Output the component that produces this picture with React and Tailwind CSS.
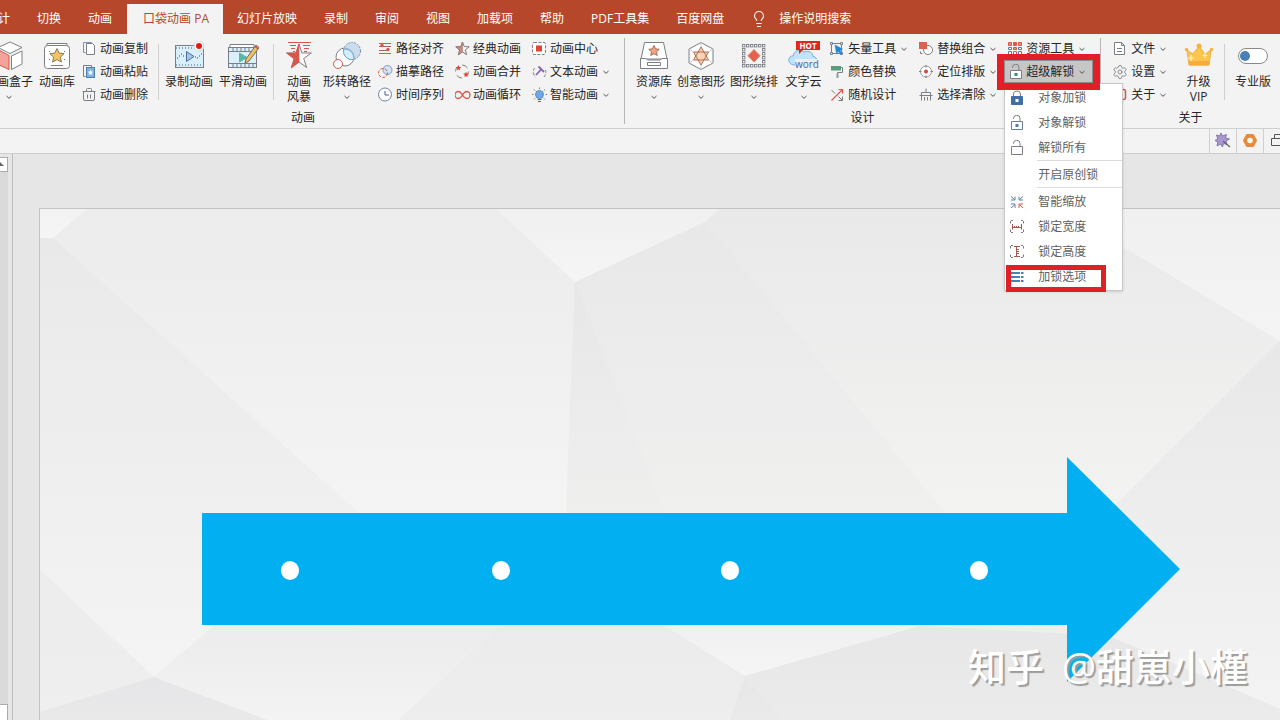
import { Settings, Lightbulb } from "lucide-react";

const RED = "#d8574a";
const BLUE = "#4a7ebb";
const GREY = "#7b7f85";

function star(cx, cy, r, inner = 0.42) {
  return Array.from({ length: 10 }, (_, i) => {
    const a = (Math.PI / 5) * i - Math.PI / 2;
    const d = i % 2 ? r * inner : r;
    return `${(cx + d * Math.cos(a)).toFixed(2)},${(cy + d * Math.sin(a)).toFixed(2)}`;
  }).join(" ");
}

function Big({ children }) {
  return (
    <svg width="32" height="30" viewBox="0 0 32 30" fill="none" stroke={GREY} className="shrink-0" aria-hidden="true">
      {children}
    </svg>
  );
}

function Small({ children }) {
  return (
    <svg width="16" height="16" viewBox="0 0 16 16" fill="none" stroke={GREY} className="shrink-0" aria-hidden="true">
      {children}
    </svg>
  );
}

function Chevron() {
  return (
    <svg width="8" height="8" viewBox="0 0 8 8" fill="none" stroke="#555" className="shrink-0" aria-hidden="true">
      <path d="M1.5 3 4 5.3 6.5 3" />
    </svg>
  );
}

/* ---------- large ribbon icons ---------- */

const BoxIcon = () => (
  <Big>
    <path d="M4 8 16 14.5V28.5L4 23Z" fill="#f4a39b" stroke={RED} />
    <path d="M17 1 29 6.5 17 12.5 5 6.5Z" fill="#fff" />
    <path d="M18.5 15 29 10V23L18.5 28.5Z" fill="#fff" />
  </Big>
);

const LibraryIcon = () => (
  <Big>
    <path d="M6 5V2.5h20V5" fill="#fff" />
    <rect x="3.5" y="4.5" width="25" height="23" rx="3" fill="#fff" />
    <polygon points={star(16, 15, 7.5, 0.48)} fill="#f3c35f" stroke="#8a7a5a" />
    <path d="M10 24.5h12" />
    <path d="M8 10l1 1M24 10l-1 1M8 19l1-1M24 19l-1-1" stroke={BLUE} />
  </Big>
);

const RecordIcon = () => (
  <Big>
    <rect x="2.5" y="4.5" width="28" height="22" fill="#d9effc" />
    <path d="M3 7h27M3 24h27" stroke="#4c5b68" strokeDasharray="1 2" />
    <path d="M13.5 10.5 21 15.5 13.500 20.5Z" fill="#a9c6ea" stroke="#4a6f9f" />
    <path d="M4 17h1M6 15h1M8 13h1M10 15h1M22 16h1M24 17h1M26 15h1M28 13h1" stroke="#3b9b80" strokeWidth="1.5" />
    <circle cx="26" cy="5" r="5" fill="#fff" stroke="#d5d5d5" />
    <circle cx="26" cy="5" r="3" fill="#e21b12" stroke="none" />
  </Big>
);

const SmoothIcon = () => (
  <Big>
    <path d="M3 6V3.5h24V6" fill="#fff" />
    <rect x="1.5" y="6.5" width="28" height="20" fill="#d9effc" />
    <path d="M2 10.5h27M2 22.5h27M6 7v3M10 7v3M14 7v3M18 7v3M22 7v3M6 23v3M10 23v3M14 23v3M18 23v3M22 23v3M26 23v3" />
    <path d="M12.5 12 20 16.500 12.5 21Z" fill="#5ab8a5" stroke="#5ab8a5" />
    <path d="M18 22 19 18 28 5.5 31 8 22 20Z" fill="#f3c35f" stroke="#6b6b6b" />
    <path d="M28 5.5 29 4 32 6.5 31 8Z" fill="#e8776a" stroke="#a85b52" />
  </Big>
);

const StormIcon = () => (
  <Big>
    <path d="M5 1.5h23M7 4.5h6M20 4.5h7M8 7.5h4M21 7.5h5M10 10.5h2M21 10.5h3" stroke={RED} />
    <polygon points={star(16, 16, 13, 0.38)} fill="#fff" />
    <path d="M16 3 12.8 12H3.6l7.5 6-2.8 9L16 21Z" fill={RED} stroke={RED} strokeWidth="0.6" />
  </Big>
);

const ShapePathIcon = () => (
  <Big>
    <circle cx="14" cy="16" r="9" fill="#fff" />
    <circle cx="21" cy="10" r="8.5" fill="#b9d3ea" fillOpacity="0.7" stroke="#7793b5" strokeDasharray="2 1" />
    <path d="M12.7 8.200a9 9 0 0 1 10.100 10.200 8.500 8.500 0 0 1-10.100-10.200Z" fill="#d6eefb" stroke="#6da3d0" />
    <circle cx="7" cy="23" r="4.5" fill="#fff" stroke={RED} />
  </Big>
);

const ResourceIcon = () => (
  <Big>
    <path d="M6.5 1.5h19L29 18H3Z" fill="#fff" />
    <path d="M2.5 17.500h5.500l1.500 1.500h13l1.500-1.500h5.500v10h-27Z" fill="#fff" />
    <polygon points={star(16, 10, 5.5, 0.48)} fill="#f4a37e" stroke="#a0705f" />
    <path d="M9.5 21.5h13v3h-13Z" fill="#fff" />
  </Big>
);

const CreativeIcon = () => (
  <Big>
    <path d="M16 1.5 28 8v14L16 28.500 4 22V8Z" fill="#fff" />
    <path d="M8.500 11h15L16 24ZM16 6 23.5 19h-15Z" fill="#fbd3b4" stroke="#a86f52" />
    <path d="M16 1.500V6M28 8l-4.500 3M28 22l-4.500-3M16 28.500V24M4 22l4.500-3M4 8l4.500 3" stroke="#c9c9c9" />
  </Big>
);

const WRAP_STEPS = [4.5, 8.5, 12.5, 16.5, 20.5, 24.5];

const WrapIcon = () => (
  <Big>
    <g fill="#fff" strokeWidth="0.9">
      {WRAP_STEPS.map((p) => (
        <g key={p}>
          <rect x={p} y="3.5" width="2.4" height="2.400" />
          <rect x={p} y="23.5" width="2.4" height="2.400" />
        </g>
      ))}
      {WRAP_STEPS.slice(1, 5).map((p) => (
        <g key={p}>
          <rect x="4.5" y={p - 1} width="2.4" height="2.400" />
          <rect x="24.5" y={p - 1} width="2.4" height="2.400" />
        </g>
      ))}
    </g>
    <path d="M16 8.5 22 14.700 16 21 10 14.700Z" fill="#e8604c" stroke="#d9826f" />
  </Big>
);

const WordCloudIcon = () => (
  <Big>
    <path d="M6 24C-1.500 23 0 14.500 5 15c1-5.500 7-7.500 11-4 5-2 9 1 9 4.500 5 .500 5 7 2 8.500Z" fill="#bfe4fb" stroke="#74b0dc" />
    <path d="M11 8v5l5-5Z" fill="#e3251b" stroke="none" />
    <rect x="8" y="0" width="24" height="9" fill="#e3251b" stroke="none" />
    <text x="20" y="7.500" textAnchor="middle" fontFamily="'Open Sans', sans-serif" fontSize="8" fontWeight="700" fill="#fff" stroke="none">HOT</text>
    <rect x="7" y="18" width="25" height="9" fill="#f3f3f3" fillOpacity="0.8" stroke="none" />
    <text x="19" y="27" textAnchor="middle" fontFamily="'Open Sans', sans-serif" fontSize="10" fill="#4a62a8" stroke="none">word</text>
  </Big>
);

const CrownIcon = () => (
  <Big>
    <path d="M4 9 10 13 16 5 22 13 28 9 26 24H6Z" fill="#fbc64b" stroke="#f2ae3c" />
    <path d="M6 20h20.500l-.5 4.500H6.500Z" fill="#f5ab40" stroke="none" />
    <circle cx="3.500" cy="8.5" r="1.700" fill="#fbb03b" stroke="none" />
    <circle cx="16" cy="5" r="2.500" fill="#fbb03b" stroke="none" />
    <circle cx="28.500" cy="8.500" r="1.700" fill="#fbb03b" stroke="none" />
    <path d="M8 14v6M5 17h6M22 12v5M19.500 14.500h5" stroke="#fff3c9" strokeWidth="1.2" />
  </Big>
);

/* ---------- small ribbon icons ---------- */

const CopyIcon = () => (
  <Small>
    <path d="M3.5 11.5h-2v-10h8v1" stroke="#7d93ad" />
    <path d="M4.5 2.5h6l2 2v9h-8Z" fill="#fff" />
  </Small>
);

const PasteIcon = () => (
  <Small>
    <path d="M3.5 12.5h-2v-11h8v2" />
    <rect x="4.5" y="3.5" width="8" height="10" fill="#7fb2e0" stroke="#4d7fb0" />
    <polygon points={star(8.5, 8.7, 3.2)} fill="#fff" stroke="none" />
  </Small>
);

const TrashIcon = () => (
  <Small>
    <path d="M.5 4.500h13M4.500 4V2.500a1 1 0 0 1 1-1h3a1 1 0 0 1 1 1V4M1.500 5v7a1.500 1.500 0 0 0 1.500 1.500h8a1.500 1.500 0 0 0 1.500-1.500V5M5.500 7.500v4M8.500 7.500v4" />
  </Small>
);

const AlignIcon = () => (
  <Small>
    <path d="M1 2.5h12M1 12.5h12" stroke={RED} />
    <path d="M1 5.500h12M1 9.500h9" stroke="#9a6a63" />
    <circle cx="4" cy="4.500" r="1.700" fill={RED} stroke="none" />
    <circle cx="10" cy="8.500" r="1.700" fill={RED} stroke="none" />
  </Small>
);

const TraceIcon = () => (
  <Small>
    <circle cx="9.500" cy="6" r="4.500" fill="#d4e2f1" stroke="#7e9cc4" />
    <circle cx="5" cy="9" r="4.500" stroke={RED} strokeDasharray="3 1.500" />
  </Small>
);

const ClockIcon = () => (
  <Small>
    <circle cx="7" cy="7.500" r="6.500" fill="#fff" stroke="#6d86a8" />
    <path d="M7 4v4h4" stroke="#4a5f80" />
  </Small>
);

const ClassicIcon = () => (
  <Small>
    <polygon points={star(7.5, 8, 7)} fill="#fff" stroke="#777" />
    <path d="M7.5 1 5.800 5.800l-5.100.1 4 3.100-1.400 4.900L7.500 11Z" fill="#c98a7d" stroke="#9b6a60" strokeWidth="0.5" />
  </Small>
);

const MergeIcon = () => (
  <Small>
    <circle cx="7" cy="7.500" r="6.500" strokeDasharray="6 4" />
    <polygon points={star(3.5, 4, 3)} fill="#e0412f" stroke="none" />
    <polygon points={star(11, 10.5, 3)} fill="#e0412f" stroke="none" />
  </Small>
);

const LoopIcon = () => (
  <Small>
    <path d="M7.500 8C6 5.500 5 4.500 3.500 4.500a3.500 3.500 0 0 0 0 7C5 11.500 6 10.500 7.500 8s2.500-3.500 4-3.500a3.500 3.500 0 0 1 0 7C10 11.500 9 10.500 7.500 8Z" stroke={RED} strokeWidth="1.300" />
  </Small>
);

const CenterIcon = () => (
  <Small>
    <rect x=".5" y="1.5" width="13" height="12" rx="1.500" fill="#fff" strokeDasharray="3 1.500" />
    <rect x="4" y="4.500" width="6" height="6" fill="#e0452f" stroke="none" />
  </Small>
);

const TextAnimIcon = () => (
  <Small>
    <path d="M2.500 4a7 7 0 0 0 1 9M12 13a7 7 0 0 0 1.500-7" strokeDasharray="3 1.500" />
    <path d="M6.500 2.500l5.500 5.500M9 5.500 4 11" stroke="#8b62b8" strokeWidth="1.800" />
  </Small>
);

const SmartIcon = () => (
  <Small>
    <circle cx="7.500" cy="7.500" r="4" fill="#6fa8e4" stroke="#5d8fc4" />
    <path d="M5.500 12.500h4M6 14.500h3" stroke="#666" />
    <path d="M7.500 .5v1.500M2 2.500l1.200 1.200M13 2.500l-1.200 1.200M0 7.500H1.500M13.500 7.500h1.500M2 12.500l1.200-1.200M13 12.500l-1.200-1.200" />
  </Small>
);

const VectorIcon = () => (
  <Small>
    <rect x="1.500" y="2.500" width="10" height="10" />
    <path d="M.5 1.500h2v2h-2ZM10.500 1.500h2v2h-2ZM.5 11.500h2v2h-2ZM10.500 11.500h2v2h-2Z" fill="#f3f3f3" />
    <path d="M5 4 12.500 8 10 9.500l2 3-1.500 1-2-3L6.500 12.500Z" fill="#1e88d8" stroke="#1e88d8" strokeWidth="0.5" />
  </Small>
);

const RollerIcon = () => (
  <Small>
    <rect x="1" y="2" width="10" height="4.500" fill="#5b9c7e" stroke="none" />
    <path d="M11 3.500h1.500v5H7.500V10" />
    <path d="M6.500 9.500h2v4.500h-2Z" fill="#8a9a94" stroke="none" />
  </Small>
);

const RandomIcon = () => (
  <Small>
    <path d="M1.500 13.500 12 3M8.500 2.500H12.500V6.500" stroke="#e0554a" strokeWidth="1.200" />
    <path d="M1.500 3l3.500 3.500M8.500 9.500l3.500 3.500M12.500 9.500v4h-4" stroke="#777" />
  </Small>
);

const ReplaceIcon = () => (
  <Small>
    <circle cx="9" cy="9" r="4.500" fill="#fff" />
    <rect x="0" y="1" width="8" height="7" fill="#e0604f" stroke="none" />
    <path d="M1.500 10.500v2h2" />
  </Small>
);

const LocateIcon = () => (
  <Small>
    <circle cx="7" cy="7.500" r="5.500" fill="#fff" stroke="#999" />
    <path d="M7 1v2.500M7 11.500v2.500M0 7.500h2.500M11.500 7.500h2.500" />
    <circle cx="7" cy="7.500" r="2" fill="#d9453a" stroke="none" />
  </Small>
);

const CleanIcon = () => (
  <Small>
    <path d="M7 1.500v4M2.500 8.500V5.500h9v3M.5 8.500h13M2.500 8.500v5M5.500 10v3.500M8.500 10v3.500M11.500 8.500v5" />
  </Small>
);

const GridIcon = () => (
  <Small>
    <g fill="#fff">
      <path d="M.5 1.500h3v3h-3ZM10.500 1.500h3v3h-3ZM5.500 6.500h3v2h-3Z" fill="#ea8a80" stroke={RED} />
      <path d="M5.500 1.500h3v3h-3Z" fill={RED} stroke={RED} />
      <path d="M.5 6.500h3v2h-3ZM10.500 6.500h3v2h-3ZM.5 10.500h3v3h-3ZM10.500 10.500h3v3h-3Z" stroke={BLUE} />
      <path d="M5.500 10.500h3v3h-3Z" stroke={RED} />
    </g>
  </Small>
);

const FileIcon = () => (
  <Small>
    <path d="M1.500 1.500h7l3 3v9h-10ZM8.500 1.500v3h3M4 7.500h5M4 10.500h5" fill="#fff" />
  </Small>
);

const GearIcon = () => (
  <Small>
    <Settings x="-1" y="0" width="16" height="16" strokeWidth="1.3" color={GREY} />
  </Small>
);

const AboutIcon = () => (
  <Small>
    <rect x="2.500" y="2.500" width="10" height="10" rx="2" stroke={RED} strokeWidth="1.500" />
    <path d="M7.500 5v5" stroke={RED} />
  </Small>
);

function LockIcon({ open, solid, keyhole, color = GREY }) {
  return (
    <Small>
      <path d={open ? "M4.5 4V3.500a3 3 0 0 1 6.500 0V6.500" : "M4.5 6.500V4a3.500 3 0 0 1 7 0V6.500"} />
      <path d="M2.500 6.500h11v8h-11Z" fill={solid ? "#3f6fa3" : "#fff"} stroke={color} />
      {keyhole && <rect x="6.500" y="9" width="3" height="3" fill={keyhole} stroke="none" />}
    </Small>
  );
}

const ShrinkIcon = () => (
  <Small>
    <path d="M2 2.500l3.500 3M6 2.500v3.500H2M14 2.500l-3.500 3M10 2.500v3.500h4M2 14l3.500-3M6 14v-4H2" stroke="#5f7fa8" />
    <path d="M14 14l-3.500-3.500M10 14v-4h4" stroke={RED} />
  </Small>
);

const LockWidthIcon = () => (
  <Small>
    <path d="M4 1.500H2M1.500 2V4.500M12 1.500h2M14.500 2V4.500M4 13.500H2M1.500 13v-2.500M12 13.500h2M14.500 13v-2.500" />
    <path d="M3.500 5v5.500M12.500 5v5.500M3.500 8.500h9M5.500 7v1.500M7.500 7v1.500M9.500 7v1.500" stroke="#a65a52" />
  </Small>
);

const LockHeightIcon = () => (
  <Small>
    <path d="M4 1.500H2M1.500 2V4.500M12 1.500h2M14.500 2V4.500M4 13.500H2M1.500 13v-2.500M12 13.500h2M14.500 13v-2.500" />
    <path d="M5 2.500h6M5 12.500h6M7.500 2.500v10M8 5.500h2M8 7.500h2M8 9.500h2" stroke="#a65a52" />
  </Small>
);

const OptionsIcon = () => (
  <Small>
    <path d="M2 4h9M2 8h9M2 12h9M12 4h2.500M12 8h2.500M12 12h2.500" stroke={BLUE} strokeWidth="2" />
  </Small>
);

/* ---------- ribbon pieces ---------- */

function BigButton({ icon, label, sub, menu, className = "px-[3px]" }) {
  return (
    <button type="button" className={`flex shrink-0 flex-col items-center pt-1 leading-[15px] ${className}`}>
      {icon}
      <span className="mt-[3px] whitespace-nowrap">{label}</span>
      {sub && <span>{sub}</span>}
      {menu && (
        <span className="flex h-[15px] items-center">
          <Chevron />
        </span>
      )}
    </button>
  );
}

function SmallButton({ icon, label, menu }) {
  return (
    <button type="button" className="flex h-[23px] items-center pl-1 whitespace-nowrap">
      <span className="w-[18px]">{icon}</span>
      <span className="mr-1">{label}</span>
      {menu && <Chevron />}
    </button>
  );
}

function Column({ items, className, children }) {
  return (
    <div className={`flex shrink-0 flex-col ${className}`}>
      {items.map(([icon, label, menu]) => (
        <SmallButton key={label} icon={icon} label={label} menu={menu} />
      ))}
      {children}
    </div>
  );
}

function Divider() {
  return <div className="mx-[3px] mt-[7px] h-14 w-px shrink-0 bg-[#cfcfcf]" />;
}

function Group({ label, className = "", children }) {
  return (
    <section aria-label={label} className={`flex shrink-0 flex-col ${className}`}>
      <div className="flex h-[71px]">{children}</div>
      <div className="text-center leading-5">{label}</div>
    </section>
  );
}

function GroupLine() {
  return <div className="mt-px mb-1 w-px shrink-0 bg-[#b5b5b5]" />;
}

const LOCK_MENU = [
  [<LockIcon solid keyhole="#fff" color="#3f6fa3" />, "对象加锁"],
  [<LockIcon open keyhole={BLUE} color="#6b7f99" />, "对象解锁"],
  [<LockIcon open />, "解锁所有"],
  null,
  [null, "开启原创锁"],
  null,
  [<ShrinkIcon />, "智能缩放"],
  [<LockWidthIcon />, "锁定宽度"],
  [<LockHeightIcon />, "锁定高度"],
  [<OptionsIcon />, "加锁选项", true],
];

function SuperUnlock() {
  return (
    <div className="relative h-[23px] w-[89px]">
      <button
        type="button"
        aria-haspopup="menu"
        aria-expanded="true"
        className="flex h-full w-full items-center border border-[#8c8f93] bg-[#c6c6c6] pl-[3px] whitespace-nowrap"
      >
        <span className="w-[18px]">
          <LockIcon open keyhole="#3b8f78" />
        </span>
        <span className="mr-1">超级解锁</span>
        <Chevron />
      </button>
      <div
        role="menu"
        className="absolute top-full left-0 z-10 w-[119px] border border-[#c8c8c8] bg-white py-px text-[#5f5f5f] shadow-sm"
      >
        {LOCK_MENU.map((item, i) =>
          item ? (
            <button key={item[1]} type="button" role="menuitem" className="relative flex h-[25px] w-full items-center pl-1">
              <span className="w-[29px]">{item[0]}</span>
              {item[1]}
              {item[2] && <span className="absolute top-px left-px h-[27px] w-[100px] border-5 border-[#e01f28]" />}
            </button>
          ) : (
            <div key={i} className="ml-8 h-[2px] border-t border-[#dcdcdc]" />
          ),
        )}
      </div>
      <span className="pointer-events-none absolute -inset-x-[7px] -top-[6px] -bottom-[7px] z-20 border-7 border-t-6 border-[#e31e26]" />
    </div>
  );
}

function Ribbon() {
  return (
    <div className="flex h-[95px] shrink-0 border-b border-[#cfcfcf] bg-[#f3f3f3] pt-[3px]">
      <Group label="动画" className="-ml-[18px]">
        <BigButton icon={<BoxIcon />} label="动画盒子" menu />
        <BigButton icon={<LibraryIcon />} label="动画库" />
        <Column
          className="w-[77px]"
          items={[
            [<CopyIcon />, "动画复制"],
            [<PasteIcon />, "动画粘贴"],
            [<TrashIcon />, "动画删除"],
          ]}
        />
        <Divider />
        <BigButton icon={<RecordIcon />} label="录制动画" />
        <BigButton icon={<SmoothIcon />} label="平滑动画" />
        <Divider />
        <BigButton icon={<StormIcon />} label="动画" sub="风暴" className="w-[43px] pl-px" />
        <BigButton icon={<ShapePathIcon />} label="形转路径" menu />
        <Column
          className="w-[77px]"
          items={[
            [<AlignIcon />, "路径对齐"],
            [<TraceIcon />, "描摹路径"],
            [<ClockIcon />, "时间序列"],
          ]}
        />
        <Column
          className="w-[77px]"
          items={[
            [<ClassicIcon />, "经典动画"],
            [<MergeIcon />, "动画合并"],
            [<LoopIcon />, "动画循环"],
          ]}
        />
        <Column
          className="w-24"
          items={[
            [<CenterIcon />, "动画中心"],
            [<TextAnimIcon />, "文本动画", true],
            [<SmartIcon />, "智能动画", true],
          ]}
        />
      </Group>
      <GroupLine />
      <Group label="设计">
        <BigButton icon={<ResourceIcon />} label="资源库" menu className="ml-2 px-[3px]" />
        <BigButton icon={<CreativeIcon />} label="创意图形" menu className="px-[2px]" />
        <BigButton icon={<WrapIcon />} label="图形绕排" menu className="px-[3px]" />
        <BigButton icon={<WordCloudIcon />} label="文字云" menu className="w-[45px]" />
        <Column
          className="w-[89px]"
          items={[
            [<VectorIcon />, "矢量工具", true],
            [<RollerIcon />, "颜色替换"],
            [<RandomIcon />, "随机设计"],
          ]}
        />
        <Column
          className="w-[89px]"
          items={[
            [<ReplaceIcon />, "替换组合", true],
            [<LocateIcon />, "定位排版", true],
            [<CleanIcon />, "选择清除", true],
          ]}
        />
        <Column className="w-24" items={[[<GridIcon />, "资源工具", true]]}>
          <SuperUnlock />
        </Column>
      </Group>
      <GroupLine />
      <Group label="关于" className="flex-1">
        <Column
          className="ml-2 w-[67px]"
          items={[
            [<FileIcon />, "文件", true],
            [<GearIcon />, "设置", true],
            [<AboutIcon />, "关于", true],
          ]}
        />
        <BigButton icon={<CrownIcon />} label="升级" sub="VIP" className="w-[45px]" />
        <Divider />
        <label className="flex w-[50px] shrink-0 flex-col items-center pt-[11px] leading-[15px]">
          <input
            type="checkbox"
            className="h-4 w-[30px] appearance-none rounded-full border border-[#888] bg-white before:ml-px before:mt-[2px] before:block before:h-[10px] before:w-[10px] before:rounded-full before:bg-[#4a80b8]"
          />
          <span className="mt-[10px]">专业版</span>
        </label>
      </Group>
    </div>
  );
}

const TABS = ["设计", "切换", "动画", "口袋动画 PA", "幻灯片放映", "录制", "审阅", "视图", "加载项", "帮助", "PDF工具集", "百度网盘"];

function TabBar() {
  return (
    <nav className="flex h-[34px] shrink-0 items-end bg-[#b7472a] text-white">
      <div className="-ml-[27px] flex gap-px">
        {TABS.map((tab) => (
          <button
            key={tab}
            type="button"
            className={
              tab === "口袋动画 PA"
                ? "ml-px h-[30px] bg-[#f3f3f3] pr-[14px] pl-4 whitespace-nowrap text-[#b7472a]"
                : "h-[30px] px-[13px] whitespace-nowrap"
            }
          >
            {tab}
          </button>
        ))}
      </div>
      <button type="button" className="ml-[13px] flex h-[30px] items-center gap-[11px] whitespace-nowrap">
        <Lightbulb size={18} strokeWidth={1.5} />
        操作说明搜索
      </button>
    </nav>
  );
}

function QuickBar() {
  return (
    <div className="flex h-[25px] shrink-0 justify-end border-b border-[#cfcfcf] bg-[#f3f3f3]">
      <button type="button" aria-label="魔法棒" className="flex w-[27px] items-center justify-center border-l border-[#cfcfcf]">
        <Small>
          <path d="M6 0l1.500 3 4-1.500-1 3.500 4 1-3.500 2 1 3.500-3.500-1-1 3.500-2-3-3.500 2 .8-4-3-1.500 3-1.500L1.500 2l3.500 1Z" fill="#a898d0" stroke="#75669f" strokeWidth="0.8" />
          <path d="M8 8l7 6" stroke="#666" strokeWidth="1.3" />
        </Small>
      </button>
      <button type="button" aria-label="选项" className="flex w-[27px] items-center justify-center border-l border-[#cfcfcf]">
        <Small>
          <path d="M5 2h6l3 5.500-3 5.500H5L2 7.500Z" fill="#e88a3c" stroke="#e88a3c" strokeWidth="2" strokeLinejoin="round" />
          <circle cx="8" cy="7.500" r="2.800" fill="#f8f8f8" stroke="none" />
        </Small>
      </button>
      <button type="button" aria-label="窗口" className="flex w-[17px] items-center overflow-hidden border-l border-[#cfcfcf] pl-[6px]">
        <Small>
          <path d="M4.500 5V1.500h12V9M1.500 5.500h12v7h-12Z" stroke="#555" />
        </Small>
      </button>
    </div>
  );
}

/* facets of the slide background: [points, top colour, bottom colour] */
const FACETS = [
  ["40,209 87,209 53,238 40,238", "#f2f2f2", "#f5f5f5"],
  ["87,209 496,209 575,282 566,514 360,514 53,238", "#ececec", "#f4f4f4"],
  ["40,238 53,238 360,514 360,626 214,626 154,677 40,570", "#e9e9e9", "#f4f4f4"],
  ["496,209 720,209 705,222 575,282", "#f0f0f0", "#f5f5f5"],
  ["575,282 705,222 946,514 566,514", "#e8e8e9", "#f0f0ef"],
  ["575,282 666,514 566,514", "#e7e7e9", "#efefee"],
  ["720,209 1060,209 1280,341 1112,514 946,514 705,222", "#e9e9e9", "#f3f3f2"],
  ["1060,209 1280,209 1280,341", "#f0f0f0", "#f4f4f4"],
  ["1280,341 1280,709 1109,636 1060,560", "#e8e8e9", "#f3f3f3"],
  ["40,570 154,677 40,712", "#ececec", "#efefef"],
  ["40,712 154,677 268,720 40,720", "#e6e6e8", "#e9e9ea"],
  ["214,626 500,626 398,720 268,720 154,677", "#ececec", "#f3f3f3"],
  ["500,626 665,626 745,676 730,720 398,720", "#ebebeb", "#eeeeee"],
  ["665,626 920,626 745,676", "#f0f0f0", "#f5f5f5"],
  ["745,676 784,720 730,720", "#e7e7e8", "#eaeaea"],
  ["745,676 920,626 1109,636 1280,709 1280,720 784,720", "#e7e7e8", "#ebebec"],
];

function Slide() {
  return (
    <svg viewBox="40 209 1240 511" preserveAspectRatio="xMinYMin slice" className="block h-full w-full" role="img" aria-label="幻灯片">
      <defs>
        {FACETS.map(([, from, to], i) => (
          <linearGradient key={i} id={`facet${i}`} x1="0" y1="0" x2="0" y2="1">
            <stop offset="0" stopColor={from} />
            <stop offset="1" stopColor={to} />
          </linearGradient>
        ))}
      </defs>
      <rect x="40" y="209" width="1240" height="511" fill="#eee" />
      {FACETS.map(([points], i) => (
        <polygon key={i} points={points} fill={`url(#facet${i})`} />
      ))}
      <path d="M202 513H1067V457L1180 569 1067 682V625H202Z" fill="#02b0f2" />
      {[290, 501, 730, 979].map((x) => (
        <ellipse key={x} cx={x} cy="570.5" rx="9" ry="9.5" fill="#fff" />
      ))}
    </svg>
  );
}

function Workspace() {
  return (
    <main className="flex min-h-0 flex-1 bg-[#e6e6e6]">
      <div className="mt-[3px] flex w-2 shrink-0 flex-col justify-between bg-[#dadada]">
        <div className="flex h-[15px] items-center overflow-hidden border border-l-0 border-[#ababab] bg-white">
          <svg width="5" height="5" viewBox="0 0 5 5" aria-hidden="true">
            <path d="M0 0 4 4H0Z" fill="#666" />
          </svg>
        </div>
        <div className="h-4 border border-b-0 border-l-0 border-[#ababab] bg-white" />
      </div>
      <div className="ml-1 w-px shrink-0 bg-[#bdbdbd]" />
      <div className="relative mt-[54px] ml-[26px] min-w-0 flex-1 border-t border-l border-[#c3c3c3]">
        <Slide />
        <p className="absolute right-8 bottom-[26px] flex gap-[18px] text-[38px] leading-14 font-medium whitespace-nowrap text-white [text-shadow:2px_2px_1px_#9c9c9c]">
          <span>知乎</span>
          <span>@甜崽小槿</span>
        </p>
      </div>
    </main>
  );
}

export default function App() {
  return (
    <div className="flex h-screen flex-col overflow-hidden font-['Open_Sans','Noto_Sans_CJK_SC',sans-serif] text-[12px] text-[#262626]">
      <TabBar />
      <Ribbon />
      <QuickBar />
      <Workspace />
    </div>
  );
}
